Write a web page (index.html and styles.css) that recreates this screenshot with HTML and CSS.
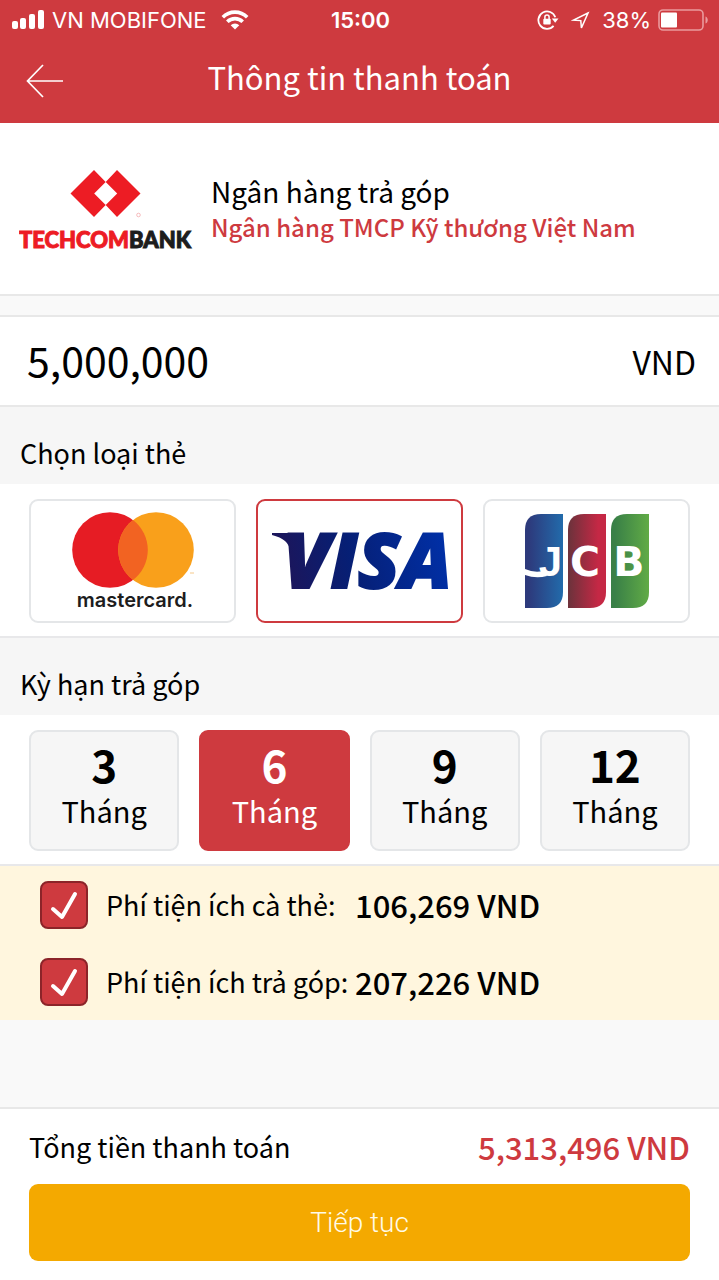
FILE: index.html
```html
<!DOCTYPE html>
<html lang="vi">
<head>
<meta charset="utf-8">
<meta name="viewport" content="width=device-width, initial-scale=1">
<title>Thông tin thanh toán</title>
<link rel="stylesheet" href="styles.css">
</head>
<body>
<form class="screen">
  <header class="header">
    <div class="status">
      <div class="status-left">
        <svg width="32" height="20" viewBox="0 0 32 20" fill="#fff" aria-hidden="true"><rect x="0" y="11" width="6" height="8" rx="2"/><rect x="8" y="8" width="6" height="11" rx="2"/><rect x="17" y="4" width="6" height="15" rx="2"/><rect x="26" y="0" width="6" height="19" rx="2"/></svg>
        <span class="carrier">VN MOBIFONE</span>
        <svg class="wifi" width="28" height="20" viewBox="0 0 28 20" fill="none" stroke="#fff" stroke-width="3.6" aria-hidden="true"><path d="M1.8 7.2a17.300 17.300 0 0 1 24.400 0M6.300 11.800a10.900 10.900 0 0 1 15.400 0"/><path d="M14 19.500l-4.300-4.300a6.100 6.100 0 0 1 8.600 0z" fill="#fff" stroke="none"/></svg>
      </div>
      <span class="clock">15:00</span>
      <div class="status-right">
        <svg width="22" height="20" viewBox="0 0 22 20" fill="none" stroke="#fff" stroke-width="1.800" aria-hidden="true"><path d="M18.300 7.300A8.700 8.700 0 1 0 16.600 15.900"/><path d="M14.800 8.500h6.700l-3.300 4.200z" fill="#fff" stroke="none"/><rect x="6.300" y="8.700" width="7.400" height="5.800" rx="1" fill="#fff" stroke="none"/><path d="M7.900 9V7a2.100 2.100 0 0 1 4.200 0v2" stroke-width="1.500"/></svg>
        <svg class="locator" width="19" height="19" viewBox="0 0 19 19" fill="none" stroke="#fff" stroke-width="1.500" aria-hidden="true"><path d="M17 2L2.500 9.200l7.300.4.600 7.400z"/></svg>
        <span>38%</span>
        <svg width="51" height="22" viewBox="0 0 51 22" aria-hidden="true"><rect x="1" y="1" width="44" height="20" rx="4" fill="none" stroke="#ea9a9d" stroke-width="1.600"/><rect x="3" y="3.500" width="16" height="15" rx="1" fill="#fff"/><path d="M47.500 7.500c3 1 3 6 0 7z" fill="#ea9a9d"/></svg>
      </div>
    </div>
    <div class="nav">
      <button class="back" type="button" aria-label="Quay lại"><svg width="38" height="34" viewBox="0 0 38 34" fill="none" stroke="#fff" stroke-width="1.700"><path d="M17 1L1.500 17 17 33M1.500 17H37"/></svg></button>
      <h1 class="title">Thông tin thanh toán</h1>
    </div>
  </header>

  <section class="bank">
    <svg class="bank-logo" width="174" height="86" viewBox="0 0 174 86" role="img" aria-label="Techcombank">
      <path d="M51.500 27.500L75 4l11.700 12L98 4l23.500 23.500L98 51 86.700 39 75 51z" fill="#ed1c24"/><path d="M86.700 16L98.200 27.500 86.700 39 75.200 27.500z" fill="#fff"/>
      <circle cx="119.500" cy="49" r="1.800" fill="none" stroke="#f2a0a3" stroke-width=".7"/>
      <text class="bank-word" x="0" y="82"><tspan fill="#ed1c24" stroke="#ed1c24">TECHCOM</tspan><tspan fill="#1d1d1d" stroke="#1d1d1d">BANK</tspan></text>
    </svg>
    <div class="bank-text">
      <p class="bank-label">Ngân hàng trả góp</p>
      <p class="bank-name">Ngân hàng TMCP Kỹ thương Việt Nam</p>
    </div>
  </section>

  <div class="amount">
    <input class="amount-input" id="amount" type="text" inputmode="numeric" value="5,000,000" aria-label="Số tiền">
    <label class="currency" for="amount">VND</label>
  </div>

  <h2 class="section-label">Chọn loại thẻ</h2>
  <div class="options" role="radiogroup" aria-label="Chọn loại thẻ">
    <label class="option card">
      <input class="hidden-input" type="radio" name="card" value="mastercard">
      <svg width="126" height="102" viewBox="-1 -2 126 102" role="img" aria-label="mastercard">
        <circle cx="39" cy="38" r="37.800" fill="#e61c24"/><circle cx="85" cy="38" r="37.800" fill="#f9a01b"/><path d="M62 8a37.800 37.800 0 0 1 0 60 37.800 37.800 0 0 1 0-60z" fill="#f26322"/>
        <text class="mc-word" x="64" y="95" text-anchor="middle">mastercard.</text><path d="M119 61h4" stroke="#f5c98a"/>
      </svg>
    </label>
    <label class="option card">
      <input class="hidden-input" type="radio" name="card" value="visa" checked>
      <svg width="180" height="118" viewBox="0 -26 180 118" role="img" aria-label="VISA">
        <defs><linearGradient id="visa" gradientUnits="userSpaceOnUse" x1="0" y1="50" x2="178" y2="10"><stop offset="0.100" stop-color="#1b165c"/><stop offset="0.450" stop-color="#061f75"/><stop offset="1" stop-color="#0030a8"/></linearGradient></defs>
        <path d="M2 5h24v18h-6q-1-12-18-16z" fill="url(#visa)"/>
        <text class="visa-word" x="13" y="60" fill="url(#visa)" stroke="url(#visa)">VISA</text>
      </svg>
    </label>
    <label class="option card">
      <input class="hidden-input" type="radio" name="card" value="jcb">
      <svg width="126" height="96" viewBox="0 0 126 96" role="img" aria-label="JCB">
        <defs>
          <linearGradient id="jb"><stop offset="0.100" stop-color="#2d3a7c"/><stop offset="1" stop-color="#226bab"/></linearGradient>
          <linearGradient id="jr"><stop offset="0.050" stop-color="#70323c"/><stop offset="0.800" stop-color="#c52845"/></linearGradient>
          <linearGradient id="jg"><stop offset="0.100" stop-color="#398047"/><stop offset="1" stop-color="#61ab46"/></linearGradient>
        </defs>
        <path d="M1 17Q1 1 17 1h22v78q0 16-16 16H1z" fill="url(#jb)"/><path d="M44 17Q44 1 60 1h22v78q0 16-16 16H44z" fill="url(#jr)"/><path d="M87 17Q87 1 103 1h22v78q0 16-16 16H87z" fill="url(#jg)"/>
        <path d="M1 56q9 4 18 2l4 5q-11 3-22-1z" fill="#fff"/>
        <text class="jcb-j" x="38" y="63" text-anchor="end">J</text>
        <text class="jcb-cb" x="61" y="63" text-anchor="middle">C</text>
        <text class="jcb-cb" x="105" y="63" text-anchor="middle">B</text>
      </svg>
    </label>
  </div>

  <h2 class="section-label">Kỳ hạn trả góp</h2>
  <div class="options" role="radiogroup" aria-label="Kỳ hạn trả góp">
    <label class="option term"><input class="hidden-input" type="radio" name="term" value="3"><span class="term-number">3</span><span class="term-unit">Tháng</span></label>
    <label class="option term"><input class="hidden-input" type="radio" name="term" value="6" checked><span class="term-number">6</span><span class="term-unit">Tháng</span></label>
    <label class="option term"><input class="hidden-input" type="radio" name="term" value="9"><span class="term-number">9</span><span class="term-unit">Tháng</span></label>
    <label class="option term"><input class="hidden-input" type="radio" name="term" value="12"><span class="term-number">12</span><span class="term-unit">Tháng</span></label>
  </div>

  <div class="fees">
    <label class="fee">
      <span class="check"><input class="check-input" type="checkbox" checked><svg class="tick" viewBox="0 0 48 48" fill="none" stroke="#fff" stroke-width="4" stroke-linecap="round" stroke-linejoin="round" aria-hidden="true"><path d="M13 28l9 8 13-23"/></svg></span>
      <span class="fee-name">Phí tiện ích cà thẻ:</span><strong class="fee-value">106,269 VND</strong>
    </label>
    <label class="fee">
      <span class="check"><input class="check-input" type="checkbox" checked><svg class="tick" viewBox="0 0 48 48" fill="none" stroke="#fff" stroke-width="4" stroke-linecap="round" stroke-linejoin="round" aria-hidden="true"><path d="M13 28l9 8 13-23"/></svg></span>
      <span class="fee-name">Phí tiện ích trả góp:</span><strong class="fee-value">207,226 VND</strong>
    </label>
  </div>

  <footer class="footer">
    <div class="total"><span>Tổng tiền thanh toán</span><strong class="total-value">5,313,496 VND</strong></div>
    <button class="submit" type="button">Tiếp tục</button>
  </footer>
</form>
</body>
</html>
```
FILE: styles.css
```css
* { box-sizing: border-box; }
body {
  margin: 0;
  background: #f9f9f9;
  color: #000;
  font-family: "Noto Sans CJK SC", "Noto Sans", sans-serif;
  font-size: 27px;
  line-height: 36px;
}
svg { display: block; flex: none; }
h1, h2, p { margin: 0; font-weight: 400; }
input, button { font: inherit; color: inherit; }
.screen { display: flex; flex-direction: column; min-height: 100vh; }

.header { background: #ce3a3f; color: #fff; }
.status {
  display: grid;
  grid-template-columns: 1fr auto 1fr;
  align-items: center;
  height: 40px;
  padding: 0 10px 0 12px;
  font-family: Inter, sans-serif;
  font-size: 22px;
}
.status-left, .status-right { display: flex; align-items: center; }
.status-left { gap: 8px; }
.status-right { justify-content: flex-end; gap: 7px; }
.wifi { margin-left: 6px; }
.locator { margin: 0 5px; }
.clock { font-weight: 600; }
.nav {
  display: grid;
  grid-template-columns: 1fr auto 1fr;
  align-items: center;
  height: 83px;
  padding: 0 26px 2px;
}
.back { justify-self: start; padding: 0; border: 0; background: none; }
.title { padding-bottom: 8px; font-size: 31px; }

.bank {
  display: flex;
  align-items: center;
  gap: 18px;
  padding: 43px 19px 42px;
  background: #fff;
  border-bottom: 2px solid #e8e8e8;
}
.bank-word { font: 900 22px Lato, sans-serif; }
.bank-label { font-size: 28px; }
.bank-name { color: #ce3a3f; font-size: 24px; font-weight: 500; }

.amount {
  display: flex;
  align-items: center;
  justify-content: space-between;
  height: 92px;
  margin-top: 19px;
  padding: 0 23px 0 27px;
  background: #fff;
  border: solid #e8e8e8;
  border-width: 2px 0;
}
.amount-input {
  flex: 1;
  min-width: 0;
  height: 64px;
  padding: 0 0 4px;
  border: 0;
  background: none;
  font-size: 41px;
}
.currency { font-size: 32px; }

.section-label {
  padding: 28px 20px 13px;
  background: #f6f6f6;
  font-size: 27px;
}
.options {
  display: flex;
  gap: 20px;
  padding: 15px 29px 13px;
  background: #fff;
  border-bottom: 2px solid #e8e8ea;
}
.option {
  position: relative;
  display: flex;
  flex: 1;
  align-items: center;
  justify-content: center;
  border: 2px solid #e4e6e8;
  border-radius: 9px;
}
.hidden-input { position: absolute; margin: 0; opacity: 0; }
.card { height: 124px; background: #fff; }
.card:has(:checked) { border-color: #ce3a3f; }
.mc-word { font: 600 20px Inter, sans-serif; fill: #1d1d1d; }
.visa-word { font: italic 800 77px "Open Sans", sans-serif; stroke-width: 2px; }
.jcb-j { font: 700 42px "Liberation Sans", sans-serif; fill: #fff; }
.jcb-cb { font: 700 41px "DejaVu Sans", sans-serif; fill: #fff; }

.term { flex-direction: column; height: 121px; padding-bottom: 10px; background: #f6f6f6; }
.term:has(:checked) { border-color: #ce3a3f; background: #ce3a3f; color: #fff; }
.term-number { font-size: 44px; font-weight: 700; line-height: 48px; }
.term-unit { font-size: 29px; line-height: 44px; }

.fees { background: #fff6de; }
.fee { display: flex; align-items: center; height: 77px; padding: 0 40px; }
.check { position: relative; width: 48px; height: 48px; margin-right: 18px; }
.check-input {
  appearance: none;
  display: block;
  width: 48px;
  height: 48px;
  margin: 0;
  background: #fff;
  border: 2px solid #8c2429;
  border-radius: 8px;
}
.check-input:checked { background: #ce3a3f; }
.tick { position: absolute; inset: 0; pointer-events: none; }
.fee-name { min-width: 249px; }
.fee-value { font-size: 31px; font-weight: 500; }

.footer {
  margin-top: auto;
  padding: 20px 29px 19px;
  background: #fff;
  border-top: 2px solid #e8e8e8;
}
.total { display: flex; align-items: center; justify-content: space-between; margin-bottom: 19px; }
.total-value { color: #ce3a3f; font-size: 31px; font-weight: 500; }
.submit {
  width: 100%;
  height: 77px;
  padding: 0;
  border: 0;
  border-radius: 9px;
  background: #f4a900;
  color: #fffbe8;
  font-family: Roboto, sans-serif;
  font-size: 28px;
  font-weight: 300;
}
```
